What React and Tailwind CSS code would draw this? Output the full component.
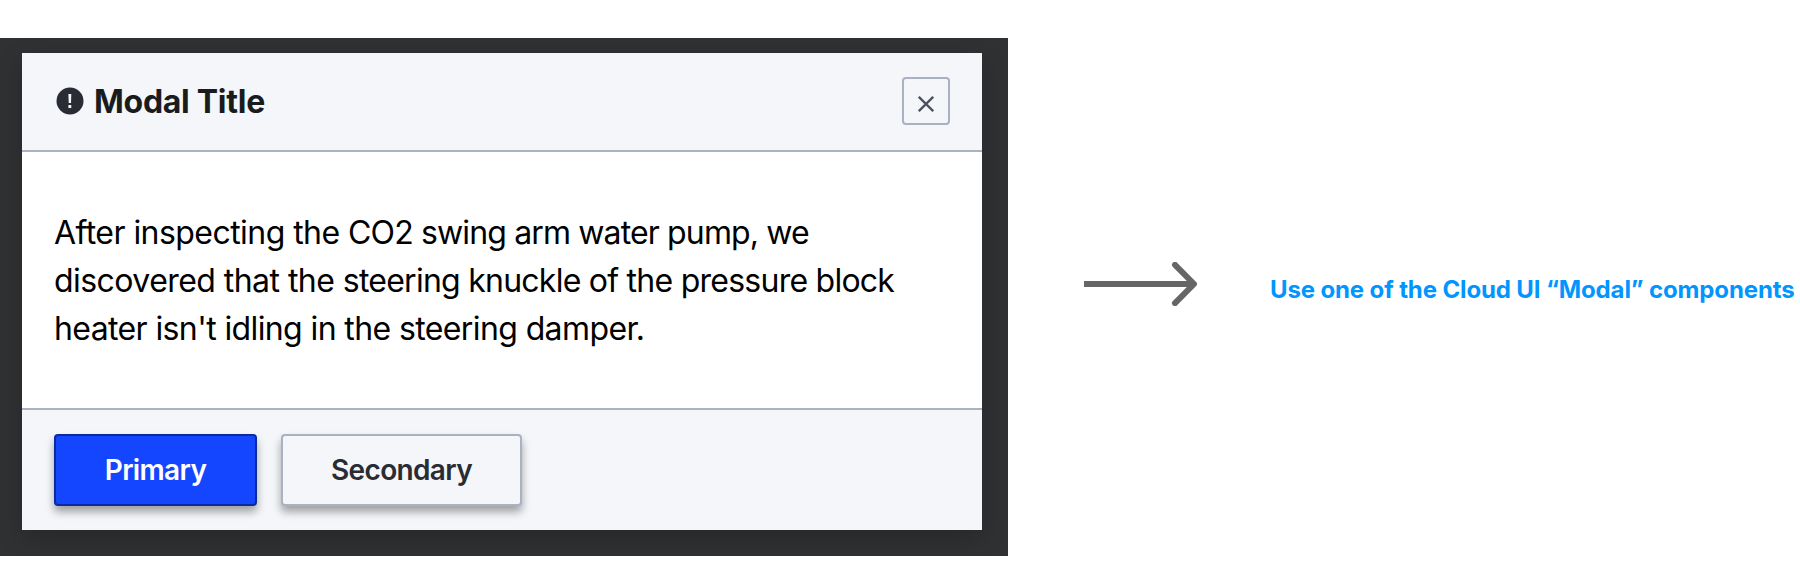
function AlertIcon() {
  return (
    <svg className="mb-[2px] size-7 shrink-0" viewBox="0 0 28 28" aria-hidden="true">
      <circle cx="14" cy="14" r="13.5" fill="#2a2c35" />
      <path d="M12.4 7h2.9l-.3 9h-2.3z" fill="#f4f6fa" />
      <rect x="12.4" y="18" width="2.9" height="3" rx=".6" fill="#f4f6fa" />
    </svg>
  );
}

function CloseIcon() {
  return (
    <svg className="mt-[6px] size-4" viewBox="0 0 16 16" aria-hidden="true">
      <path d="M.8.8l14.4 14.4M15.2.8L.8 15.2" stroke="#4d515f" strokeWidth="2.3" fill="none" />
    </svg>
  );
}

function Arrow() {
  return (
    <svg className="mt-[31px] h-11 w-[113px] shrink-0" viewBox="0 0 113 44" fill="none" aria-hidden="true">
      <path d="M0 22h109" stroke="#666" strokeWidth="6" />
      <path d="M91 2.8L110 22 91 41.2" stroke="#666" strokeWidth="6" strokeLinecap="round" strokeLinejoin="round" />
    </svg>
  );
}

function Modal() {
  return (
    <section className="flex h-[477px] w-[960px] flex-col bg-white shadow-[0_8px_24px_rgba(0,0,0,0.2)]">
      <header className="flex h-[99px] items-start justify-between border-b-2 border-[#a9b1c2] bg-[#f4f6fa] pt-6 pr-8 pl-[34px]">
        <div className="flex items-center gap-[10px] pt-[10px]">
          <AlertIcon />
          <h1 className="text-[32px] leading-[30px] font-bold tracking-[-0.28px] whitespace-nowrap text-[#1a1b1d]">Modal Title</h1>
        </div>
        <button aria-label="Close" className="flex size-12 items-center justify-center rounded-[4px] border-2 border-[#a9b1c2]">
          <CloseIcon />
        </button>
      </header>
      <div className="flex-1 pt-[57px] pl-8 text-[32px] leading-[48px] whitespace-nowrap text-black">
        <p>
          <span className="tracking-[-0.55px]">After inspecting the </span>
          <span className="tracking-[-0.86px]">CO2 swing arm water pump, we</span>
          <br />
          <span className="tracking-[-0.55px]">discovered that the </span>
          <span className="tracking-[-0.75px]">steering knuckle of the pressure block</span>
          <br />
          <span className="tracking-[-0.61px]">heater isn't idling in the steering damper.</span>
        </p>
      </div>
      <footer className="flex h-[122px] gap-6 border-t-2 border-[#a9b1c2] bg-[#f4f6fa] pt-6 pl-8 text-[28px] leading-8 font-semibold tracking-[-0.65px]">
        <button className="h-[72px] w-[203px] rounded-[4px] border-2 border-[#0b2a9c] bg-[#1446ff] text-white shadow-[0_6px_8px_rgba(0,0,0,0.35)]">
          Primary
        </button>
        <button className="h-[72px] w-[241px] rounded-[4px] border-2 border-[#a9b1c2] bg-[#f4f6fa] text-[#2a2c33] shadow-[0_6px_8px_rgba(0,0,0,0.35)]">
          Secondary
        </button>
      </footer>
    </section>
  );
}

export default function App() {
  return (
    <main className="flex h-[586px] w-[1800px] items-start overflow-hidden bg-white pt-[38px] font-['Inter',sans-serif]">
      <div className="h-[518px] w-[1008px] shrink-0 overflow-hidden bg-[#303133] pt-[15px] pl-[22px]">
        <Modal />
      </div>
      <div className="flex h-[518px] flex-1 items-start pt-[193px] pl-[76px]">
        <Arrow />
        <p className="mt-[43px] ml-[73px] text-[24px] leading-8 font-bold tracking-[-0.13px] whitespace-nowrap text-[#0095ff]">
          Use one of the Cloud UI “Modal” components
        </p>
      </div>
    </main>
  );
}
